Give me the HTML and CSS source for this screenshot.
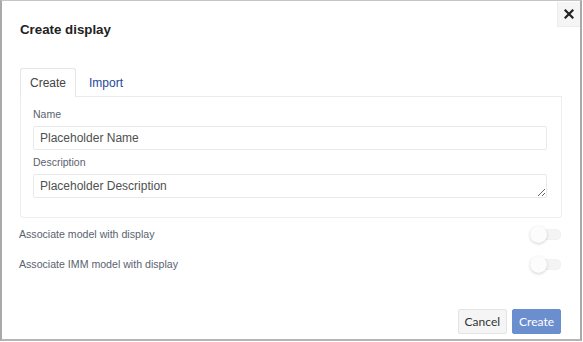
FILE: index.html
```html
<!DOCTYPE html>
<html lang="en">
<head>
    <meta charset="UTF-8">
    <meta name="viewport" content="width=device-width, initial-scale=1.0">
    <title>Create display</title>
    <link rel="stylesheet" href="styles.css">
</head>
<body>
    <div class="dialog">
        <button class="close-btn" type="button" aria-label="Close">
            <svg width="10" height="10" viewBox="0 0 10 10">
                <path d="M1.5 1.5 L8.5 8.5 M8.5 1.5 L1.5 8.5" stroke="#222" stroke-width="2.2" stroke-linecap="square"/>
            </svg>
        </button>
        <header class="dialog-header">
            <h1>Create display</h1>
        </header>

        <div class="tabs">
            <div class="tab active">Create</div>
            <div class="tab">Import</div>
        </div>
        <div class="tab-panel">
            <label class="field-label">Name</label>
            <input class="field" type="text" placeholder="Placeholder Name">
            <label class="field-label">Description</label>
            <textarea class="field area" placeholder="Placeholder Description"></textarea>
        </div>

        <div class="options">
            <div class="option-row">
                <span>Associate model with display</span>
                <span class="toggle"><span class="knob"></span></span>
            </div>
            <div class="option-row">
                <span>Associate IMM model with display</span>
                <span class="toggle"><span class="knob"></span></span>
            </div>
        </div>

        <footer class="dialog-footer">
            <button class="btn" type="button">Cancel</button>
            <button class="btn btn-primary" type="button">Create</button>
        </footer>
    </div>
</body>
</html>
```

FILE: styles.css
```css
body {
    font-family: 'Liberation Sans', Arial, sans-serif;
    margin: 0;
    padding: 0;
    background-color: #ffffff;
    color: #333;
}
.dialog {
    position: relative;
    box-sizing: border-box;
    width: 582px;
    height: 341px;
    border: 1px solid #c4c4c4;
    border-left: 2px solid #a9a9a9;
    border-right: 2px solid #a9a9a9;
    border-bottom: 2px solid #b5b5b5;
    padding: 0 18px 0 17px;
    display: flex;
    flex-direction: column;
}
.dialog-header {
    padding-top: 21px;
    height: 45px;
    box-sizing: border-box;
}
h1 {
    margin: 0;
    font-size: 13.3px;
    line-height: 16px;
    font-weight: bold;
    color: #222;
    padding-left: 1px;
}
.close-btn {
    position: absolute;
    top: 1px;
    right: 0;
    width: 23px;
    height: 25px;
    border: none;
    border-left: 1px solid #ececec;
    border-bottom: 1px solid #ececec;
    background-color: #f5f5f5;
    padding: 0;
    display: flex;
    align-items: center;
    justify-content: center;
    cursor: pointer;
}
.tabs {
    display: flex;
    margin-top: 22px;
    border-bottom: 1px solid #ebebeb;
    margin-left: 1px;
}
.tab {
    height: 27px;
    line-height: 29px;
    padding: 0 10px;
    font-size: 12px;
    color: #24479a;
    border: 1px solid transparent;
    border-bottom: none;
    margin-bottom: -1px;
}
.tab.active {
    color: #444;
    background-color: #fff;
    border-color: #e6e6e6;
    border-radius: 3px 3px 0 0;
    height: 28px;
    padding: 0 9px;
}
.tab + .tab {
    padding-left: 12px;
}
.tab-panel {
    margin-left: 1px;
    border: 1px solid #ededed;
    border-top: none;
    border-radius: 0 0 4px 4px;
    padding: 11px 14px 19px 12px;
    display: flex;
    flex-direction: column;
}
.field-label {
    font-size: 10.5px;
    line-height: 13px;
    color: #5a6270;
    margin-bottom: 5px;
}
.field {
    box-sizing: border-box;
    height: 24px;
    border: 1px solid #e9e9e9;
    border-radius: 2px;
    padding: 0 6px;
    font-family: 'Liberation Sans', Arial, sans-serif;
    font-size: 12px;
    color: #444;
    background-color: #fff;
    margin-bottom: 6px;
}
.field::placeholder {
    color: #505050;
}
.area {
    resize: vertical;
    padding-top: 4px;
    margin-bottom: 0;
    display: block;
}
.options {
    padding-top: 1px;
}
.option-row {
    display: flex;
    justify-content: space-between;
    align-items: center;
    height: 30px;
    font-size: 10.6px;
    color: #5a6270;
    padding-right: 1px;
}
.toggle {
    position: relative;
    width: 31px;
    height: 11px;
    border-radius: 6px;
    background-color: #f4f4f4;
    box-shadow: inset 0 0 1px rgba(0, 0, 0, 0.08);
}
.knob {
    position: absolute;
    left: 0;
    top: -3px;
    width: 17px;
    height: 17px;
    border-radius: 50%;
    background-color: #fcfcfc;
    box-shadow: 0 1px 3px rgba(0, 0, 0, 0.18);
}
.dialog-footer {
    margin-top: auto;
    display: flex;
    justify-content: flex-end;
    gap: 5px;
    padding-bottom: 5px;
    padding-right: 1px;
}
.btn {
    height: 25px;
    padding: 0 6px;
    font-family: Lato, 'Liberation Sans', sans-serif;
    font-size: 12px;
    color: #333;
    background-color: #f5f5f5;
    border: 1px solid #e4e4e4;
    border-radius: 2px;
    cursor: pointer;
}
.btn-primary {
    background-color: #6b8ecf;
    border-color: #6b8ecf;
    color: #fff;
}
```
